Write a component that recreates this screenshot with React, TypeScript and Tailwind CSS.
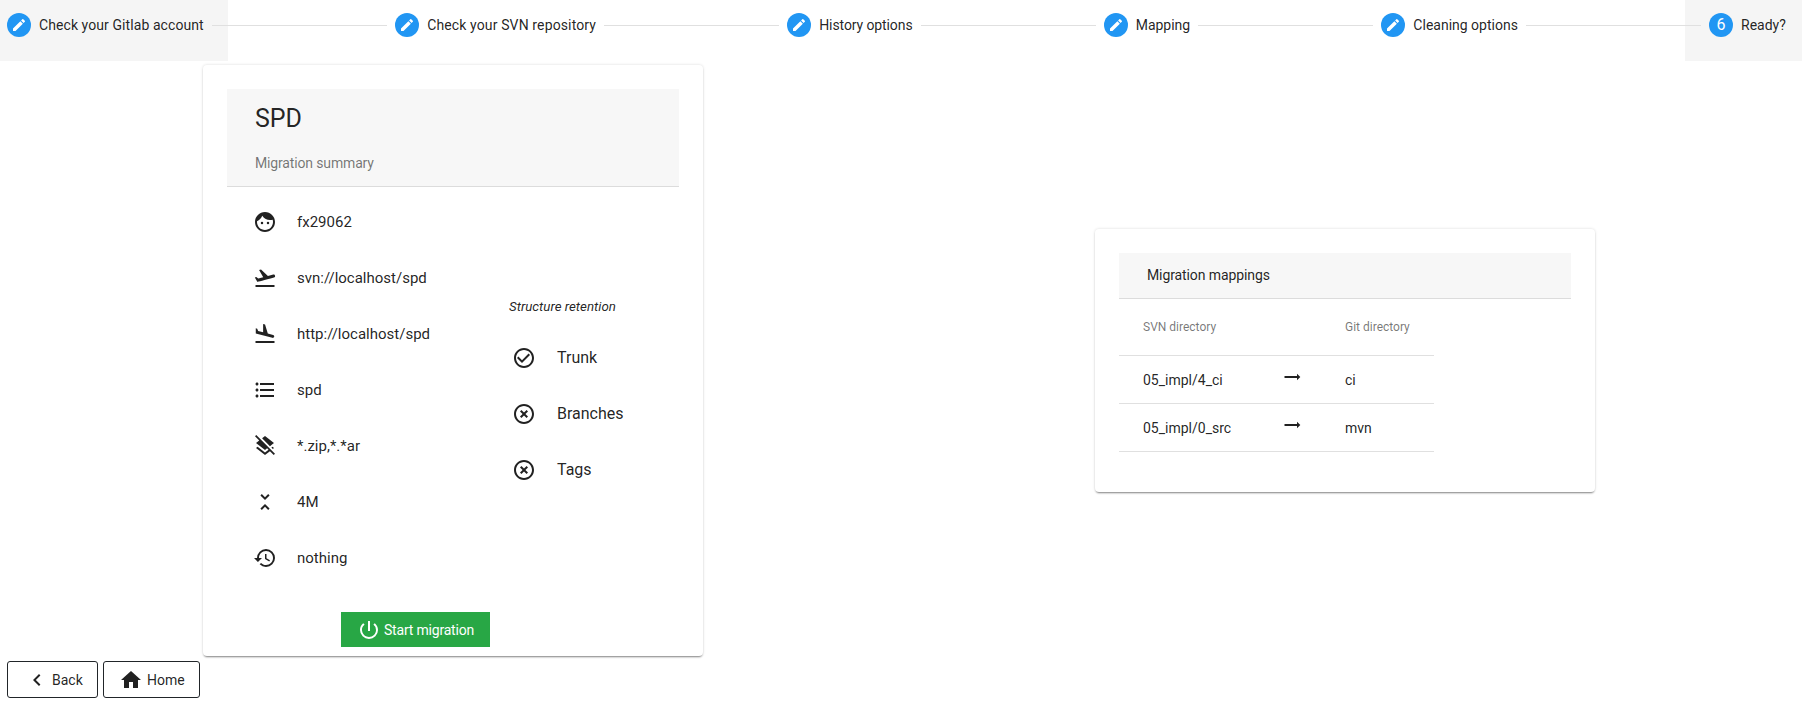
import React from 'react';
import {
  MdChevronLeft,
  MdCheckCircleOutline,
  MdEdit,
  MdFace,
  MdFlightLand,
  MdFlightTakeoff,
  MdFormatListBulleted,
  MdHighlightOff,
  MdHistory,
  MdHome,
  MdLayersClear,
  MdPowerSettingsNew,
  MdUnfoldLess,
} from 'react-icons/md';

const cardShadow = 'shadow-[0_0_3px_0_rgba(0,0,0,0.15),0_2px_2px_-1px_rgba(0,0,0,0.45)]';

const summaryRows = [
  { icon: MdFace, label: 'fx29062' },
  { icon: MdFlightTakeoff, label: 'svn://localhost/spd' },
  { icon: MdFlightLand, label: 'http://localhost/spd' },
  { icon: MdFormatListBulleted, label: 'spd' },
  { icon: MdLayersClear, label: '*.zip,*.*ar' },
  { icon: MdUnfoldLess, label: '4M' },
  { icon: MdHistory, label: 'nothing' },
];

const retentionRows = [
  { icon: MdCheckCircleOutline, label: 'Trunk' },
  { icon: MdHighlightOff, label: 'Branches' },
  { icon: MdHighlightOff, label: 'Tags' },
];

const mappings = [
  { svn: '05_impl/4_ci', git: 'ci' },
  { svn: '05_impl/0_src', git: 'mvn' },
];

const Step = ({ label, number, className }: { label: string; number?: number; className?: string }) => (
  <div className="flex items-center gap-2">
    <span className="flex h-6 w-6 shrink-0 items-center justify-center rounded-full bg-[#2196f3] text-white">
      {number ? <span className="text-[16px] leading-none">{number}</span> : <MdEdit size={16} />}
    </span>
    <span className={`text-sm whitespace-nowrap ${className ?? ''}`}>{label}</span>
  </div>
);

const Line = () => <div className="h-px flex-1 bg-[#e0e0e0]" />;

const InfoRow = ({
  icon: Icon,
  label,
  className,
}: {
  icon: React.ElementType;
  label: string;
  className: string;
}) => (
  <div className="flex h-14 items-center">
    <Icon size={24} className="shrink-0" />
    <span className={className}>{label}</span>
  </div>
);

// trending_flat, a little heavier than the stock icon
const ArrowIcon = () => (
  <svg viewBox="0 0 24 24" width="20" height="20" fill="currentColor" className="-mt-1.5">
    <path d="M22 12l-4-4v2.7H3v2.6h15V16z" />
  </svg>
);

const App: React.FC = () => {
  return (
    <div className="h-[706px] overflow-hidden bg-white font-['Roboto',sans-serif] text-[#000000de]">
      {/* stepper */}
      <div className="flex h-[61px]">
        <div className="flex w-[228px] shrink-0 items-start bg-[#f5f5f5] pl-[7px] pt-[13px]">
          <Step label="Check your Gitlab account" className="tracking-[0.08px]" />
        </div>
        <div className="flex flex-1 items-start pt-[13px]">
          <div className="relative -ml-4 mr-2 flex h-6 flex-1 items-center">
            <Line />
          </div>
          <Step label="Check your SVN repository" className="tracking-[0.13px]" />
          <div className="mx-2 flex h-6 flex-1 items-center">
            <Line />
          </div>
          <Step label="History options" className="tracking-[-0.1px]" />
          <div className="mx-2 flex h-6 flex-1 items-center">
            <Line />
          </div>
          <Step label="Mapping" />
          <div className="mx-2 flex h-6 flex-1 items-center">
            <Line />
          </div>
          <Step label="Cleaning options" />
          <div className="relative z-10 -mr-4 ml-2 flex h-6 flex-1 items-center">
            <Line />
          </div>
        </div>
        <div className="flex w-[117px] shrink-0 items-start bg-[#f5f5f5] pl-6 pt-[13px]">
          <Step label="Ready?" number={6} />
        </div>
      </div>

      <div className="mt-1 flex items-center">
        {/* summary card */}
        <div className={`ml-[203px] w-[500px] rounded bg-white px-6 pb-[9px] pt-6 ${cardShadow}`}>
          <div className="border-b border-[#dcdcdc] bg-[#f7f7f7] pb-[13px] pl-7 pt-[14px]">
            <h2 className="text-[25px] leading-8">SPD</h2>
            <p className="mt-[18px] text-sm leading-5 tracking-[-0.15px] text-[#0000008a]">Migration summary</p>
          </div>
          <div className="flex">
            <div className="w-[282px] pb-2 pl-[26px] pt-[7px]">
              {summaryRows.map(row => (
                <InfoRow key={row.label} icon={row.icon} label={row.label} className="ml-5 text-[15px]" />
              ))}
            </div>
            <div className="pt-[112px]">
              <p className="text-[13.3px] leading-4 italic">Structure retention</p>
              <div className="mt-[15px] pl-[3px]">
                {retentionRows.map(row => (
                  <InfoRow key={row.label} icon={row.icon} label={row.label} className="ml-[21px] text-base" />
                ))}
              </div>
            </div>
          </div>
          <button className="ml-[114px] mt-[18px] flex h-[35px] w-[149px] items-center justify-center gap-[3px] bg-[#28a745] text-sm tracking-[-0.2px] text-white">
            <MdPowerSettingsNew size={24} />
            Start migration
          </button>
        </div>

        {/* mappings card */}
        <div className={`ml-[392px] w-[500px] rounded bg-white px-6 pb-10 pt-6 ${cardShadow}`}>
          <div className="flex h-[46px] items-center border-b border-[#dcdcdc] bg-[#f7f7f7] pl-7 text-sm tracking-[-0.1px]">
            Migration mappings
          </div>
          <table className="w-[315px] table-fixed">
            <thead>
              <tr className="h-[57px] border-b border-[#e0e0e0] text-xs text-[#0000008a]">
                <th className="w-[163px] pl-6 text-left font-normal">SVN directory</th>
                <th className="w-[63px]" />
                <th className="text-left font-normal">Git directory</th>
              </tr>
            </thead>
            <tbody>
              {mappings.map(m => (
                <tr key={m.svn} className="h-12 border-b border-[#e0e0e0] text-sm">
                  <td className="pl-6">{m.svn}</td>
                  <td>
                    <ArrowIcon />
                  </td>
                  <td>{m.git}</td>
                </tr>
              ))}
            </tbody>
          </table>
        </div>
      </div>

      {/* footer buttons */}
      <div className="ml-[7px] mt-[5px] flex gap-[5px]">
        <button className="flex h-[37px] w-[91px] items-center rounded-[3px] border border-[#212529] pl-[17px] text-sm">
          <MdChevronLeft size={24} />
          <span className="ml-[3px]">Back</span>
        </button>
        <button className="flex h-[37px] w-[97px] items-center rounded-[3px] border border-[#212529] pl-[15px] text-sm">
          <MdHome size={24} />
          <span className="ml-1">Home</span>
        </button>
      </div>
    </div>
  );
};

export default App;
